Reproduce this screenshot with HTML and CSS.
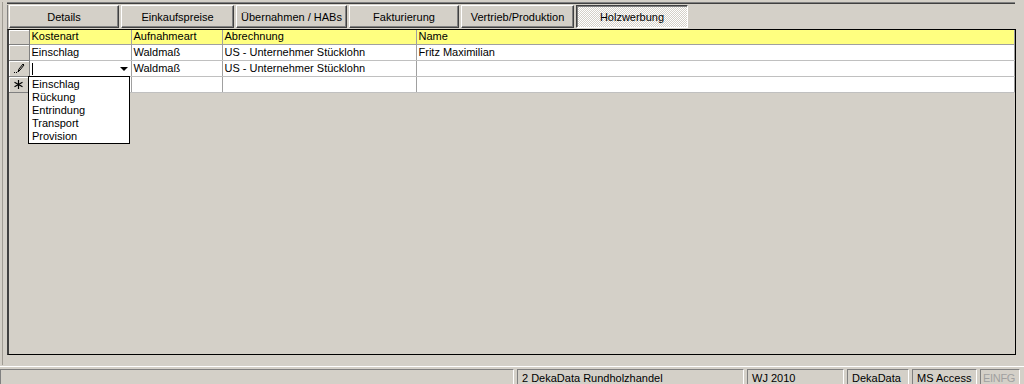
FILE: index.html
```html
<!DOCTYPE html>
<html lang="de">
<head>
    <meta charset="UTF-8">
    <title>Holzwerbung</title>
    <link rel="stylesheet" href="styles.css">
</head>
<body>
    <div class="main">
        <div class="rule"></div>
        <div class="tabs">
            <div class="tab" style="width: 110px">Details</div>
            <div class="tab" style="width: 113px">Einkaufspreise</div>
            <div class="tab" style="width: 111px">Übernahmen / HABs</div>
            <div class="tab" style="width: 110px">Fakturierung</div>
            <div class="tab" style="width: 113px">Vertrieb/Produktion</div>
            <div class="tab active" style="width: 112px">Holzwerbung</div>
        </div>
        <div class="grid">
            <table class="sheet">
                <colgroup>
                    <col class="c-sel">
                    <col class="c-kost">
                    <col class="c-aufn">
                    <col class="c-abr">
                    <col>
                </colgroup>
                <thead>
                    <tr>
                        <th class="sel"></th>
                        <th>Kostenart</th>
                        <th>Aufnahmeart</th>
                        <th>Abrechnung</th>
                        <th>Name</th>
                    </tr>
                </thead>
                <tbody>
                    <tr>
                        <td class="sel"></td>
                        <td>Einschlag</td>
                        <td>Waldmaß</td>
                        <td>US - Unternehmer Stücklohn</td>
                        <td>Fritz Maximilian</td>
                    </tr>
                    <tr>
                        <td class="sel">
                            <svg width="12" height="12" viewBox="0 0 12 12">
                                <path d="M5 10 L6 7 L10 2 L11 3 L7 8 Z" fill="none" stroke="#000" stroke-width="1"/>
                                <rect x="1" y="10" width="1" height="1" fill="#000"/>
                                <rect x="3" y="10" width="1" height="1" fill="#000"/>
                            </svg>
                        </td>
                        <td class="combo">
                            <span class="caret"></span>
                            <span class="arrow"></span>
                        </td>
                        <td>Waldmaß</td>
                        <td>US - Unternehmer Stücklohn</td>
                        <td></td>
                    </tr>
                    <tr>
                        <td class="sel">
                            <svg width="11" height="11" viewBox="0 0 11 11">
                                <path d="M5.5 1 V10 M1.5 3.2 L9.5 7.8 M1.5 7.8 L9.5 3.2" stroke="#000" stroke-width="1.2"/>
                            </svg>
                        </td>
                        <td></td>
                        <td></td>
                        <td></td>
                        <td></td>
                    </tr>
                </tbody>
            </table>
            <ul class="droplist">
                <li>Einschlag</li>
                <li>Rückung</li>
                <li>Entrindung</li>
                <li>Transport</li>
                <li>Provision</li>
            </ul>
        </div>
    </div>
    <div class="status">
        <div class="panel" style="width: 514px"></div>
        <div class="panel" style="width: 227px">2 DekaData Rundholzhandel</div>
        <div class="panel" style="width: 97px">WJ 2010</div>
        <div class="panel" style="width: 62px">DekaData</div>
        <div class="panel" style="width: 65px">MS Access</div>
        <div class="panel off" style="width: 40px">EINFG</div>
    </div>
</body>
</html>
```

FILE: styles.css
```css
* {
    margin: 0;
    padding: 0;
    box-sizing: border-box;
}
html, body {
    width: 1024px;
    height: 384px;
    overflow: hidden;
}
body {
    font-family: "Liberation Sans", Arial, sans-serif;
    font-size: 11px;
    background-color: #d4d0c8;
    color: #000;
}
.main {
    height: 363px;
    margin-left: 2px;
    padding-left: 4px;
    border-left: 1px solid #a09c94;
}
.rule {
    margin-top: 2px;
    margin-right: 9px;
    height: 2px;
    border-top: 1px solid #808080;
    border-bottom: 1px solid #404040;
}
.tabs {
    display: flex;
    gap: 2px;
    margin-top: 1px;
    padding-left: 1px;
    border-left: 1px solid #808080;
    height: 24px;
}
.tab {
    height: 23px;
    display: flex;
    align-items: center;
    justify-content: center;
    border-top: 1px solid #fff;
    border-left: 1px solid #fff;
    border-right: 1px solid #404040;
    border-bottom: 1px solid #404040;
    box-shadow: inset -1px -1px 0 #808080;
}
.tab.active {
    border-top: 1px solid #404040;
    border-left: 1px solid #404040;
    border-right: 1px solid #fff;
    border-bottom: 1px solid #fff;
    box-shadow: inset 1px 1px 0 #808080;
    background: repeating-conic-gradient(#fff 0 25%, #d4d0c8 0 50%) 0 0 / 2px 2px;
}
.grid {
    position: relative;
    width: 1009px;
    height: 326px;
    border: 1px solid #000;
    border-left-width: 2px;
    border-left-color: #404040;
}
.sheet {
    width: 1006px;
    border-collapse: collapse;
    table-layout: fixed;
}
.c-sel { width: 20px; }
.c-kost { width: 102px; }
.c-aufn { width: 91px; }
.c-abr { width: 194px; }
.sheet th,
.sheet td {
    height: 16px;
    padding: 0 0 0 2px;
    text-align: left;
    font-weight: normal;
    white-space: nowrap;
    overflow: hidden;
    border-right: 1px solid #a0a0a0;
    border-bottom: 1px solid #c0c0c0;
    background-color: #fff;
    vertical-align: middle;
}
.sheet th {
    height: 14px;
    line-height: 13px;
    background-color: #ffff80;
    border-bottom-color: #a0a0a0;
}
.sheet .sel {
    padding: 0;
    text-align: center;
    background-color: #d4d0c8;
    border-right: 1px solid #808080;
    border-bottom: 1px solid #808080;
    box-shadow: inset 1px 1px 0 #fff;
}
.sel svg {
    display: block;
    margin: 0 auto;
}
.combo {
    position: relative;
}
.caret {
    position: absolute;
    left: 2px;
    top: 2px;
    width: 1px;
    height: 12px;
    background-color: #000;
}
.arrow {
    position: absolute;
    right: 3px;
    top: 6px;
    width: 0;
    height: 0;
    border-left: 4px solid transparent;
    border-right: 4px solid transparent;
    border-top: 4px solid #000;
}
.droplist {
    position: absolute;
    left: 19px;
    top: 46px;
    width: 102px;
    height: 68px;
    list-style: none;
    background-color: #fff;
    border: 1px solid #000;
    padding: 1px 0 0 3px;
}
.droplist li {
    height: 13px;
    line-height: 13px;
}
.status {
    display: flex;
    gap: 3px;
    border-top: 1px solid #fff;
    margin-top: 1px;
    padding-top: 2px;
}
.status .panel {
    height: 18px;
    padding: 2px 0 0 4px;
    border-top: 1px solid #808080;
    border-left: 1px solid #808080;
    border-right: 1px solid #fff;
    border-bottom: 1px solid #fff;
    white-space: nowrap;
    overflow: hidden;
}
.status .panel.off {
    padding-left: 2px;
    letter-spacing: -0.3px;
    color: #a0a0a0;
}
```
